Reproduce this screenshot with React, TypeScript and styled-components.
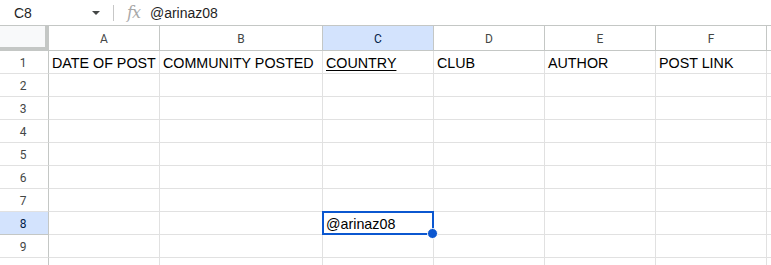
import React from "react";
import styled, { createGlobalStyle, css } from "styled-components";

const GlobalStyle = createGlobalStyle`
    html, body {
        margin: 0;
        padding: 0;
        background: #ffffff;
        overflow: hidden;
    }
    body {
        font-family: "Liberation Sans", Arial, sans-serif;
        width: 771px;
        height: 265px;
    }
`;

const COLUMNS = ["A", "B", "C", "D", "E", "F", ""];
const WIDTHS = [111, 163, 111, 111, 111, 111];
const ROW_COUNT = 11;
const SELECTED_COL = 2;
const SELECTED_ROW = 8;

const HEADER_BORDER = "#c4c7c5";
const GRID_LINE = "#e1e1e1";
const SELECT_BLUE = "#0b57d0";

const Page = styled.div`
    width: 771px;
    height: 265px;
    overflow: hidden;
    display: flex;
    flex-direction: column;
`;

const FormulaBar = styled.div`
    height: 25px;
    flex: none;
    display: flex;
    align-items: center;
    border-bottom: 1px solid ${HEADER_BORDER};
    color: #1f1f1f;
    font-size: 14px;
`;

const NameBox = styled.div`
    width: 113px;
    display: flex;
    align-items: center;
    justify-content: space-between;
    padding: 0 13px 0 14px;
    box-sizing: border-box;
`;

const Caret = styled.span`
    width: 0;
    height: 0;
    border-left: 4px solid transparent;
    border-right: 4px solid transparent;
    border-top: 4px solid #444746;
`;

const Divider = styled.span`
    width: 1px;
    height: 16px;
    background: #c7c7c7;
`;

const FxLabel = styled.span`
    font-family: "DejaVu Serif", "Liberation Serif", serif;
    font-style: italic;
    font-size: 16px;
    color: #a8a8a8;
    margin: 0 10px 0 13px;
    letter-spacing: -1px;
`;

const Grid = styled.div`
    display: grid;
    grid-template-columns: 49px ${WIDTHS.map((w) => `${w}px`).join(" ")} 1fr;
    grid-auto-rows: 23px;
    grid-template-rows: 25px;
`;

const Corner = styled.div`
    background: #f8f9fa;
    border-right: 4px solid ${HEADER_BORDER};
    border-bottom: 4px solid ${HEADER_BORDER};
`;

const headerText = css`
    font-family: Roboto, "Liberation Sans", Arial, sans-serif;
    font-size: 12px;
    display: flex;
    align-items: center;
    justify-content: center;
`;

const ColHeader = styled.div<{ $active?: boolean }>`
    ${headerText}
    border-right: 1px solid ${HEADER_BORDER};
    border-bottom: 1px solid ${HEADER_BORDER};
    background: ${(p) => (p.$active ? "#d3e3fd" : "#ffffff")};
    color: ${(p) => (p.$active ? "#041e49" : "#444746")};
    padding-top: 1px;
`;

const RowHeader = styled.div<{ $active?: boolean }>`
    ${headerText}
    border-right: 1px solid ${HEADER_BORDER};
    border-bottom: 1px solid ${(p) => (p.$active ? HEADER_BORDER : GRID_LINE)};
    background: ${(p) => (p.$active ? "#d3e3fd" : "#ffffff")};
    color: ${(p) => (p.$active ? "#041e49" : "#444746")};
    padding-right: 2px;
    padding-top: 1px;
`;

const Cell = styled.div<{ $link?: boolean }>`
    position: relative;
    border-right: 1px solid ${GRID_LINE};
    border-bottom: 1px solid ${GRID_LINE};
    font-size: 14.3px;
    line-height: 22px;
    color: #000000;
    padding: 1px 3px 0;
    white-space: nowrap;
    ${(p) =>
        p.$link &&
        css`
            text-decoration: underline;
            text-underline-offset: 2px;
        `}
`;

const Selection = styled.div`
    position: absolute;
    z-index: 2;
    top: -1px;
    left: -1px;
    right: -1px;
    bottom: -1px;
    border: 2px solid ${SELECT_BLUE};
    pointer-events: none;
`;

const FillHandle = styled.span`
    position: absolute;
    right: -6px;
    bottom: -6px;
    width: 9px;
    height: 9px;
    border-radius: 50%;
    background: ${SELECT_BLUE};
    border: 1px solid #ffffff;
`;

const headings = [
    "DATE OF POST",
    "COMMUNITY POSTED",
    "COUNTRY",
    "CLUB",
    "AUTHOR",
    "POST LINK",
    "",
];

const cellValue = (row: number, col: number) => {
    if (row === 1) return headings[col];
    if (row === SELECTED_ROW && col === SELECTED_COL) return "@arinaz08";
    return "";
};

export default function App() {
    const rows = Array.from({ length: ROW_COUNT }, (_, i) => i + 1);
    return (
        <Page>
            <GlobalStyle />
            <FormulaBar>
                <NameBox>
                    <span>C8</span>
                    <Caret />
                </NameBox>
                <Divider />
                <FxLabel>fx</FxLabel>
                <span>@arinaz08</span>
            </FormulaBar>
            <Grid>
                <Corner />
                {COLUMNS.map((c, i) => (
                    <ColHeader key={i} $active={i === SELECTED_COL}>
                        {c}
                    </ColHeader>
                ))}
                {rows.map((r) => (
                    <React.Fragment key={r}>
                        <RowHeader $active={r === SELECTED_ROW}>{r}</RowHeader>
                        {COLUMNS.map((_, c) => {
                            const selected =
                                r === SELECTED_ROW && c === SELECTED_COL;
                            return (
                                <Cell
                                    key={c}
                                    $link={r === 1 && c === SELECTED_COL}
                                >
                                    {cellValue(r, c)}
                                    {selected && (
                                        <Selection>
                                            <FillHandle />
                                        </Selection>
                                    )}
                                </Cell>
                            );
                        })}
                    </React.Fragment>
                ))}
            </Grid>
        </Page>
    );
}
